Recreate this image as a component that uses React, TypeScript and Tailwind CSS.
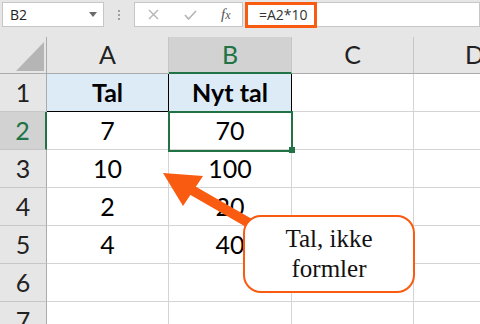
import React from 'react';

const cols = ['A', 'B', 'C', 'D'];

const rows: string[][] = [
  ['Tal', 'Nyt tal', '', ''],
  ['7', '70', '', ''],
  ['10', '100', '', ''],
  ['2', '20', '', ''],
  ['4', '40', '', ''],
  ['', '', '', ''],
  ['', '', '', ''],
];

const cellFont = { fontFamily: 'Lato, "Open Sans", sans-serif' };

function Toolbar() {
  return (
    <div className="flex h-[37px] shrink-0 items-start bg-[#e6e6e6] pl-[2px] pt-[2px]" style={{ fontFamily: '"Open Sans", "Noto Sans", sans-serif' }}>
      {/* Name box */}
      <div className="flex h-[25px] w-[102px] items-center justify-between border border-[#c6c6c6] bg-white pl-[7px] pr-[6px]">
        <span className="text-[14px] leading-none text-[#222]">B2</span>
        <svg width="8" height="5" viewBox="0 0 8 5">
          <path d="M0 0 L8 0 L4 5 Z" fill="#6a6a6a" />
        </svg>
      </div>

      {/* Drag dots */}
      <div className="flex h-[25px] w-[30px] flex-col items-center justify-center gap-[2px]">
        <div className="h-[2px] w-[2px] bg-[#a0a0a0]" />
        <div className="h-[2px] w-[2px] bg-[#a0a0a0]" />
        <div className="h-[2px] w-[2px] bg-[#a0a0a0]" />
      </div>

      {/* Cancel / enter / fx */}
      <div className="flex h-[25px] w-[109px] items-center border border-[#c6c6c6] bg-white pl-[13px]">
        <svg width="11" height="11" viewBox="0 0 11 11">
          <path d="M1 1 L10 10 M10 1 L1 10" stroke="#b4b4b4" strokeWidth="1.4" fill="none" />
        </svg>
        <svg className="ml-[25px]" width="13" height="10" viewBox="0 0 13 10">
          <path d="M1 5 L4.5 9 L12 1" stroke="#b4b4b4" strokeWidth="1.6" fill="none" />
        </svg>
        <span className="ml-[24px] text-[15px] italic leading-none text-[#555]" style={{ fontFamily: '"Liberation Serif", serif' }}>
          f<span className="text-[12px]">x</span>
        </span>
      </div>

      {/* Formula */}
      <div className="ml-[2px] flex flex-1 items-start">
        <div className="flex h-[26px] w-[72px] items-center border-[3px] border-[#f95b10] bg-white pl-[11px]">
          <span className="text-[14px] leading-none text-[#333]">=A2*10</span>
        </div>
        <div className="h-[25px] flex-1 border-y border-r border-[#c6c6c6] bg-white" />
      </div>
    </div>
  );
}

function Grid() {
  return (
    <div className="relative grid w-[536px] grid-cols-[47px_122px_123px_122px_122px] grid-rows-[37px_repeat(7,38px)]" style={cellFont}>
      {/* Corner */}
      <div className="relative border-b border-r border-[#ababab] bg-[#e6e6e6]">
        <svg className="absolute left-[15px] top-[5px]" width="30" height="30" viewBox="0 0 30 30">
          <path d="M1 29 L29 0 L29 29 Z" fill="#b5b5b5" />
        </svg>
      </div>
      {cols.map((c) => {
        const sel = c === 'B';
        return (
          <div
            key={c}
            className={
              sel
                ? 'flex items-center justify-center border-b-2 border-r border-b-[#217346] border-r-[#c6c6c6] bg-[#d2d2d2] text-[25px] text-[#217346]'
                : 'flex items-center justify-center border-b border-r border-b-[#ababab] border-r-[#c6c6c6] bg-[#e6e6e6] text-[25px] text-[#222]'
            }
          >
            {c}
          </div>
        );
      })}

      {rows.map((r, i) => {
        const n = i + 1;
        const sel = n === 2;
        return (
          <React.Fragment key={n}>
            <div
              className={
                sel
                  ? 'flex items-center justify-center border-b border-r-2 border-b-[#c6c6c6] border-r-[#217346] bg-[#d2d2d2] text-[25px] text-[#217346]'
                  : 'flex items-center justify-center border-b border-r border-b-[#c6c6c6] border-r-[#ababab] bg-[#e6e6e6] text-[25px] text-[#222]'
              }
            >
              {n}
            </div>
            {r.map((v, j) => {
              const head = n === 1 && j < 2;
              return (
                <div
                  key={j}
                  className={
                    head
                      ? 'flex items-center justify-center border-b border-r border-black bg-[#ddebf7] text-[25px] font-bold text-black'
                      : 'flex items-center justify-center border-b border-r border-[#d4d4d4] bg-white text-[25px] text-black'
                  }
                >
                  {v}
                </div>
              );
            })}
          </React.Fragment>
        );
      })}

      {/* Active cell B2 */}
      <div className="pointer-events-none absolute left-[168px] top-[74px] h-[41px] w-[125px] border-2 border-[#217346]" />
      <div className="pointer-events-none absolute left-[289px] top-[110px] h-[6px] w-[6px] bg-[#217346]" />
    </div>
  );
}

export default function App() {
  return (
    <div className="relative flex h-[324px] w-[480px] flex-col overflow-hidden bg-white">
      <Toolbar />
      <Grid />

      {/* Arrow */}
      <svg className="pointer-events-none absolute left-0 top-0" width="480" height="324" viewBox="0 0 480 324">
        <line x1="190" y1="189" x2="256" y2="227" stroke="#f95b10" strokeWidth="10" strokeLinecap="round" />
        <path d="M163 173 L203 176 L183 206 Z" fill="#f95b10" />
      </svg>

      {/* Callout */}
      <div
        className="absolute left-[243px] top-[215px] flex h-[78px] w-[172px] flex-col items-center justify-center rounded-[18px] border-2 border-[#f95b10] bg-white text-[25px] leading-[30px] text-[#111]"
        style={{ fontFamily: '"Liberation Serif", serif' }}
      >
        <span>Tal, ikke</span>
        <span>formler</span>
      </div>
    </div>
  );
}
